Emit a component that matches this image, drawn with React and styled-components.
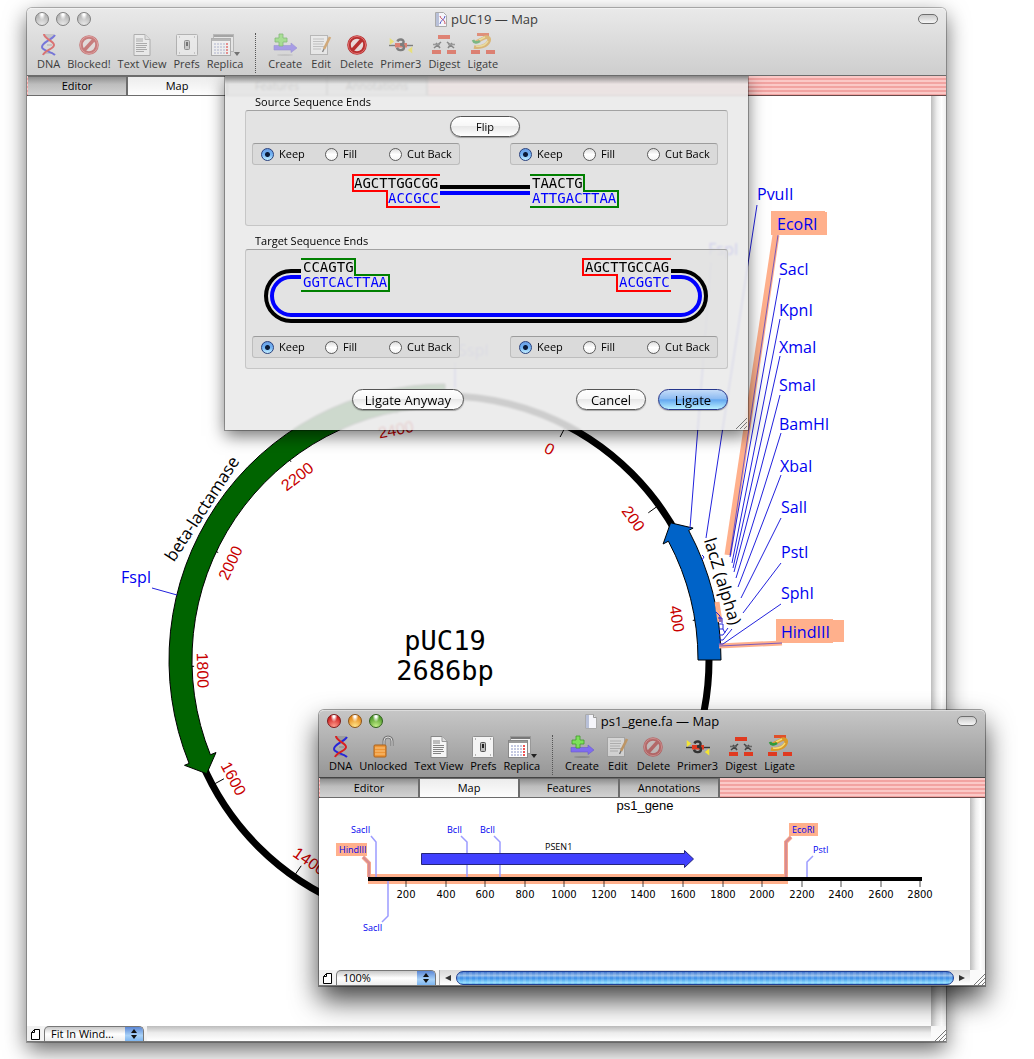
import React from "react";
import styled, { createGlobalStyle, css } from "styled-components";

const SANS = `"Open Sans", "Noto Sans", sans-serif`;
const MONO = `"DejaVu Sans Mono", monospace`;

const GlobalStyle = createGlobalStyle`
  * {
    box-sizing: border-box;
  }

  body {
    margin: 0;
    background: #fff;
    font-family: ${SANS};
    font-size: 11px;
    color: #000;
  }

  button, input, select {
    font-family: inherit;
  }

  svg {
    display: block;
  }
`;

const Desktop = styled.main`
  position: relative;
  padding: 8px 88px 18px 27px;
  overflow: hidden;
`;

const Window = styled.section`
  border-radius: 5px 5px 0 0;
  background: #fff;
  box-shadow: 0 0 0 1px rgba(0, 0, 0, 0.25), 0 8px 22px rgba(0, 0, 0, 0.6);
`;

const FloatingWindow = styled(Window)`
  position: absolute;
  left: 319px;
  top: 710px;
  width: 666px;
  box-shadow: 0 0 0 1px rgba(0, 0, 0, 0.35), 0 14px 28px rgba(0, 0, 0, 0.75);
`;

const Header = styled.header`
  height: 68px;
  border-radius: 5px 5px 0 0;
  border-top: 1px solid ${(p) => (p.$active ? "#dcdcdc" : "#f2f2f2")};
  border-bottom: 1px solid ${(p) => (p.$active ? "#444" : "#6b6b6b")};
  background: ${(p) =>
    p.$active
      ? "linear-gradient(#c6c6c6, #969696)"
      : "linear-gradient(#e9e9e9, #cecece)"};
  color: ${(p) => (p.$active ? "#000" : "#3c3c3c")};
`;

const TitleBar = styled.div`
  display: grid;
  grid-template-columns: 1fr auto 1fr;
  align-items: center;
  height: 20px;
  padding: 0 8px;
`;

const Lights = styled.div`
  display: flex;
  gap: 7px;
`;

const Light = styled.button`
  width: 14px;
  height: 14px;
  padding: 0;
  border: 1px solid ${(p) => p.$edge};
  border-radius: 50%;
  background: radial-gradient(ellipse at 50% 5%, #fff 0 12%, transparent 40%),
    radial-gradient(circle at 50% 95%, ${(p) => p.$glow}, ${(p) => p.$tone} 75%);
`;

const Title = styled.h1`
  display: flex;
  align-items: center;
  gap: 4px;
  margin: 0;
  font-size: 13px;
  line-height: 18px;
  font-weight: 400;
`;

const Pill = styled.button`
  justify-self: end;
  width: 20px;
  height: 10px;
  padding: 0;
  border: 1px solid #6e6e6e;
  border-radius: 5px;
  background: linear-gradient(#c9c9c9, #f6f6f6);
`;

const ToolBar = styled.div`
  display: flex;
  gap: 7px;
  height: 46px;
  padding: 4px 10px 0;
`;

const Tool = styled.button`
  display: flex;
  flex-direction: column;
  align-items: center;
  padding: 0;
  border: 0;
  background: none;
  color: inherit;
  font-size: 11px;
  line-height: 14px;
  white-space: nowrap;

  svg {
    height: 24px;
    opacity: ${(p) => (p.$dim ? 0.55 : 1)};
  }
`;

const Divider = styled.span`
  width: 0;
  height: 40px;
  margin: 0 5px;
  border-left: 1px dotted #555;
`;

const Body = styled.div`
  position: relative;
`;

const TabStrip = styled.div`
  display: flex;
  height: 20px;
  padding-left: 1px;
  border-bottom: 1px solid #6b4a4a;
  background: repeating-linear-gradient(#fbc9c7 0 2px, #f2a3a1 2px 4px);
`;

const Tab = styled.button`
  width: 100px;
  height: 20px;
  padding: 0;
  border: 1px solid #6c6c6c;
  border-width: 1px 2px 1px 0;
  font-size: 11px;
  line-height: 16px;
  background: ${(p) =>
    p.$selected
      ? "linear-gradient(#ececec, #fdfdfd)"
      : "linear-gradient(#8f8f8f, #bdbdbd 40%, #d2d2d2)"};
`;

const Canvas = styled.div`
  display: grid;
  grid-template-columns: 1fr 15px;

  > svg {
    width: 100%;
    height: auto;
  }
`;

const Track = styled.div`
  background: linear-gradient(to right, #bdbdbd, #eee 40%, #fff 70%, #f0f0f0);
`;

const Footer = styled.footer`
  display: flex;
  align-items: stretch;
  height: 16px;
  border-bottom: 1px solid #777;
  background: #f3f3f3;
`;

const PageButton = styled.button`
  width: 14px;
  margin-right: 3px;
  padding: 2px 0 0 4px;
  border: 0;
  background: #f0f0f0;
`;

const ZoomBox = styled.label`
  position: relative;
  width: 100px;
  margin-right: 3px;
  border: 1px solid #777;
  border-bottom: 0;
  border-radius: 5px 5px 0 0;
  overflow: hidden;
  background: linear-gradient(#c8c8c8, #fff 50%, #ededed);
`;

const ZoomSelect = styled.select`
  display: block;
  width: 100%;
  height: 100%;
  padding: 0 18px 0 6px;
  border: 0;
  background: none;
  appearance: none;
  font-size: 11px;
  line-height: 14px;
`;

const Stepper = styled.span`
  position: absolute;
  top: 0;
  right: 0;
  width: 18px;
  height: 100%;
  padding: 1px 0 0 5px;
  background: linear-gradient(#5a86d4, #a9d2f8 60%, #7fb6f0);
  pointer-events: none;
`;

const EmptyBar = styled.div`
  flex: 1;
  background: linear-gradient(#bcbcbc, #ececec 45%, #fff);
`;

const ScrollBar = styled.div`
  display: flex;
  align-items: center;
  flex: 1;
  border-left: 1px solid #aaa;
  background: linear-gradient(#d8d8d8, #fff);
`;

const ScrollArrow = styled.button`
  width: 16px;
  height: 100%;
  padding: 0;
  border: 0;
  background: none;
  color: #333;

  svg {
    margin: 0 auto;
  }
`;

const Thumb = styled.div`
  flex: 1;
  height: 14px;
  border: 1px solid #1f3f93;
  border-radius: 7px;
  background: repeating-linear-gradient(
      to right,
      rgba(255, 255, 255, 0.12) 0 3px,
      transparent 3px 6px
    ),
    linear-gradient(#4176cf, #8fbcec 30%, #3d8ee8 50%, #8ddcff 90%, #5aa5e0);
`;

const Grip = styled.div`
  display: flex;
  align-items: flex-end;
  justify-content: flex-end;
  width: 15px;
  background: #fafafa;
`;

const Sheet = styled.form`
  position: absolute;
  top: 0;
  left: 0;
  right: 0;
  display: flex;
  flex-direction: column;
  width: 523px;
  margin: 0 auto;
  padding: 18px 20px 20px;
  background: linear-gradient(rgba(110, 110, 110, 0.8), rgba(150, 150, 150, 0) 8px),
    rgba(233, 233, 233, 0.88);
  backdrop-filter: blur(1px);
  box-shadow: 0 0 0 1px rgba(0, 0, 0, 0.3), 0 6px 16px rgba(0, 0, 0, 0.55);
  clip-path: inset(0 -30px -30px -30px);
`;

const GroupTitle = styled.h2`
  margin: 0 0 0 10px;
  font-size: 11px;
  line-height: 16px;
  font-weight: 400;
`;

const Group = styled.section`
  display: flex;
  flex-direction: column;
  margin-bottom: 7px;
  padding: 5px 9px 10px 6px;
  border: 1px solid #c6c6c6;
  border-top-color: #a2a2a2;
  border-radius: 3px;
  background: rgba(224, 224, 224, 0.7);

  > svg {
    width: 100%;
    height: auto;
  }
`;

const EndsRow = styled.div`
  display: flex;
  justify-content: space-between;
`;

const RadioBox = styled.div`
  display: grid;
  grid-template-columns: 64px 64px 1fr;
  align-items: center;
  width: 208px;
  height: 22px;
  padding-left: 8px;
  border: 1px solid #bdbdbd;
  border-top-color: #9c9c9c;
  border-radius: 3px;
  background: #dadada;
`;

const RadioLabel = styled.label`
  display: flex;
  align-items: center;
  gap: 5px;
  line-height: 16px;
  white-space: nowrap;
`;

const Radio = styled.input`
  width: 13px;
  height: 13px;
  margin: 0;
  border: 1px solid #5c5c5c;
  border-radius: 50%;
  appearance: none;
  background: linear-gradient(#ddd, #fff 50%, #f4f4f4);

  &:checked {
    border-color: #27407e;
    background: radial-gradient(circle, #0b1b38 0 2px, transparent 3px),
      linear-gradient(#6a9fe3, #72b3f5 50%, #c5f0ff);
  }
`;

const PushButton = styled.button`
  min-width: 70px;
  height: 21px;
  padding: 0 12px;
  border: 1px solid #555;
  border-radius: 11px;
  font-size: ${(p) => (p.$small ? 11 : 13)}px;
  line-height: 18px;
  background: linear-gradient(#fff, #f7f7f7 45%, #e8e8e8 50%, #fff);
  box-shadow: 0 1px 1px rgba(0, 0, 0, 0.3);

  ${(p) =>
    p.$primary &&
    css`
      border-color: #26368c;
      background: linear-gradient(#c5dcf8, #8ebcf2 45%, #64a8f0 52%, #b8efff);
    `}
`;

const FlipButton = styled(PushButton)`
  align-self: center;
  margin-bottom: 6px;
`;

const Actions = styled.div`
  display: flex;
  justify-content: flex-end;
  gap: 12px;
  padding-top: 13px;
`;

const Anyway = styled(PushButton)`
  margin-right: 100px;
`;

const SheetGrip = styled.div`
  position: absolute;
  right: 1px;
  bottom: 1px;
`;

const Spot = styled.text`
  font-family: ${SANS};
  font-size: ${(p) => p.$size || 16}px;
  fill: #0000f0;
`;

const Mark = styled.text`
  font-family: "Liberation Sans", Arial, sans-serif;
  font-size: 16px;
  fill: #c80000;
  text-anchor: middle;
`;

const FeatureName = styled.text`
  font-family: ${SANS};
  font-size: 17px;
  text-anchor: middle;
  paint-order: stroke;
  stroke: #fff;
  stroke-width: 4px;
`;

const Plasmid = styled.text`
  font-family: ${MONO};
  font-size: 27px;
  text-anchor: middle;
`;

const Strand = styled.text`
  font-family: ${MONO};
  font-size: 14px;
  fill: ${(p) => (p.$lower ? "#0000ff" : "#000")};
`;

const Ruler = styled.text`
  font-family: "DejaVu Sans", sans-serif;
  font-size: 10px;
  text-anchor: middle;
`;

const GeneName = styled.text`
  font-family: "Liberation Sans", Arial, sans-serif;
  font-size: 13px;
  text-anchor: middle;
`;

/* ---------- icons ---------- */

const DnaShape = () => (
  <g fill="none" strokeWidth="2">
    <path d="M5 2h9M6 4h7M7 12h5M5 20h8" stroke="#888" strokeWidth="1" />
    <path d="M15 2C12 7 2 9 2 14c0 4 9 4 13 8" stroke="#2626d8" />
    <path d="M4 1c0 5 10 7 10 11S5 17 3 22" stroke="#d82020" />
  </g>
);

const Stop = () => (
  <svg width="22" height="24" viewBox="0 0 22 24">
    <circle cx="11" cy="12" r="8" fill="#f3dada" fillOpacity=".5" stroke="#b83030" strokeWidth="3.6" />
    <path d="M16 6.500L6 17.500" stroke="#b83030" strokeWidth="3.400" />
    <circle cx="11" cy="12" r="8.600" fill="none" stroke="#e07070" strokeWidth="1" />
  </svg>
);

const Bars = () => (
  <g fill="#e03a20">
    <rect x="0" y="17" width="9" height="4" />
    <rect x="15" y="17" width="9" height="4" />
  </g>
);

const icons = {
  dna: (
    <svg width="18" height="24" viewBox="0 0 18 24">
      <DnaShape />
    </svg>
  ),
  stop: <Stop />,
  lock: (
    <svg width="24" height="24" viewBox="0 0 24 24">
      <path d="M13 12V6a4 4 0 0 1 8 0v5" fill="none" stroke="#777" strokeWidth="3" />
      <path d="M13 12V6a4 4 0 0 1 8 0v5" fill="none" stroke="#ddd" strokeWidth="1" />
      <rect x="3" y="10" width="12" height="12" rx="1" fill="#ef9636" stroke="#a8601b" />
      <path d="M4 13h10M4 16h10M4 19h10" stroke="#f9c682" />
    </svg>
  ),
  page: (
    <svg width="20" height="24" viewBox="0 0 20 24">
      <path d="M2 1.500h11l5 5v16H2z" fill="#f6f6f6" stroke="#888" />
      <path d="M13 1.500v5h5" fill="#ddd" stroke="#999" />
      <path d="M4 6h7M4 8h7M4 10.500h11M4 12.500h11M4 14.500h10M4 16.500h11M4 18.500h8" stroke="#777" strokeWidth=".9" />
    </svg>
  ),
  prefs: (
    <svg width="24" height="24" viewBox="0 0 24 24">
      <rect x="1.500" y="1.500" width="21" height="21" rx="1" fill="#f4f4f4" stroke="#909090" />
      <rect x="9.500" y="7.500" width="5" height="9" rx="1" fill="#bbb" stroke="#555" />
      <path d="M12 9v4" stroke="#222" strokeWidth="2" />
      <path d="M4 4h1M19 4h1M4 20h1M19 20h1" stroke="#777" />
    </svg>
  ),
  replica: (
    <svg width="30" height="24" viewBox="0 0 30 24">
      <rect x="3.500" y="1.500" width="20" height="17" fill="#eee" stroke="#999" />
      <path d="M4 3h19" stroke="#777" strokeWidth="2" />
      <rect x="1.500" y="5.500" width="19" height="17" fill="#fff" stroke="#888" />
      <path d="M2 7h18" stroke="#999" strokeWidth="2" />
      <path d="M4 11h11M4 14h11M4 17h11M4 20h11" stroke="#8a94c4" strokeDasharray="2 1" />
      <path d="M17 10v11" stroke="#e55" strokeWidth="2" strokeDasharray="2 1" />
      <path d="M24 19h6l-3 4z" fill="#222" />
    </svg>
  ),
  create: (
    <svg width="26" height="24" viewBox="0 0 26 24">
      <path d="M2 12.500h17v-2.500l6 5-6 4.500v-2.500H2z" fill="#7f6cf0" stroke="#6a5acb" strokeWidth=".6" />
      <path d="M7 1h4v4h4v4h-4v4H7V9H3V5h4z" fill="#7de05a" stroke="#3f9c2c" strokeWidth=".8" />
      <ellipse cx="13" cy="22" rx="8" ry="1" fill="#000" opacity=".15" />
    </svg>
  ),
  edit: (
    <svg width="24" height="24" viewBox="0 0 24 24">
      <rect x="1.500" y="2.500" width="17" height="19" fill="#f4f4f4" stroke="#999" />
      <path d="M4 6h11M4 8.500h11M4 11h10M4 13.500h11M4 16h8" stroke="#999" strokeWidth=".8" />
      <path d="M21 4l-6 12" stroke="#c9822c" strokeWidth="2.600" />
      <path d="M15 16l-1.500 3" stroke="#444" strokeWidth="1.400" />
    </svg>
  ),
  primer: (
    <svg width="26" height="24" viewBox="0 0 26 24">
      <path d="M1 12.500h24" stroke="#333" strokeWidth="1.400" />
      <rect x="7" y="10" width="12" height="4.500" fill="#e03a20" />
      <path d="M2.500 6.500l2.500 2-2.500 2zM23.500 15l-2.500 2 2.500 2z" fill="#f4e532" stroke="#f4e532" strokeWidth="1.500" />
      <path d="M9.500 8.500c1-3 7-2.500 6 1-.4 1.600-2 2-3.500 2 2 0 4 .6 4 2.700 0 3.500-6 4-7 .5" fill="none" stroke="#333" strokeWidth="2.400" />
    </svg>
  ),
  digest: (
    <svg width="24" height="24" viewBox="0 0 24 24">
      <rect x="6" y="2" width="12" height="4" fill="#e03a20" />
      <path d="M2 15l7-6M4 10l4 5M22 15l-7-6M20 10l-4 5" stroke="#444" strokeWidth="1.600" />
      <path d="M1 11.500h7M16 11.500h7" stroke="#666" strokeWidth="1.400" />
      <Bars />
    </svg>
  ),
  ligate: (
    <svg width="24" height="24" viewBox="0 0 24 24">
      <rect x="6" y="0" width="12" height="3" fill="#e0502a" />
      <path d="M3 14c5 1 13-1 15-6 1-3-2-5-5-3l-8 4" fill="none" stroke="#d89a2a" strokeWidth="3.600" />
      <path d="M5 13c6 1 10-2 12-5M8 7l6-3" fill="none" stroke="#f6dc70" strokeWidth="1.400" />
      <path d="M2 7c1 3 4 3 7 1" fill="none" stroke="#2f9a3a" strokeWidth="2.600" />
      <Bars />
    </svg>
  ),
};

const GripLines = () => (
  <svg width="12" height="12" viewBox="0 0 12 12">
    <path d="M1 12L12 1M5 12l7-7M9 12l3-3" stroke="#777" />
  </svg>
);

const DocIcon = ({ dna }) => (
  <svg width="12" height="15" viewBox="0 0 12 15">
    <path d="M.5.500h8l3 3v11H.500z" fill="#f5f5fa" stroke="#aaa" />
    <path d="M1 1h3v13H1z" fill="#b8c0d8" />
    {dna ? (
      <g fill="none">
        <path d="M5 4c1 4 5 3 5 8" stroke="#c84a5a" />
        <path d="M10 4c0 4-5 4-5 8" stroke="#5a5ac8" />
      </g>
    ) : (
      <path d="M8.500.500v3h3" stroke="#999" fill="#ddd" />
    )}
  </svg>
);

/* ---------- window parts ---------- */

const GREY = { tone: "#b5b5b5", glow: "#e8e8e8", edge: "#808080" };
const COLORS = [
  { tone: "#cf1f1f", glow: "#ff9c8c", edge: "#7c1b1b" },
  { tone: "#e58a1c", glow: "#ffe58a", edge: "#8a5418" },
  { tone: "#4f9a2a", glow: "#c5f08a", edge: "#2f5f1c" },
];

const WindowHeader = ({ title, active, first }) => {
  const names = ["Close", "Minimize", "Zoom"];
  const left = [["dna", "DNA"], first, ["page", "Text View"], ["prefs", "Prefs"], ["replica", "Replica"]];
  const right = [
    ["create", "Create"],
    ["edit", "Edit", true],
    ["stop", "Delete", active],
    ["primer", "Primer3"],
    ["digest", "Digest"],
    ["ligate", "Ligate"],
  ];
  const tool = ([icon, label, dim]) => (
    <Tool key={label} $dim={dim || (!active && label !== "Delete")}>
      {icons[icon]}
      {label}
    </Tool>
  );
  return (
    <Header $active={active}>
      <TitleBar>
        <Lights>
          {names.map((name, i) => {
            const c = active ? COLORS[i] : GREY;
            return <Light key={name} aria-label={name} $tone={c.tone} $glow={c.glow} $edge={c.edge} />;
          })}
        </Lights>
        <Title>
          <DocIcon dna={!active} />
          {title}
        </Title>
        <Pill aria-label="Toggle toolbar" />
      </TitleBar>
      <ToolBar>
        {left.map(tool)}
        <Divider />
        {right.map(tool)}
      </ToolBar>
    </Header>
  );
};

const Tabs = () => (
  <TabStrip role="tablist">
    {["Editor", "Map", "Features", "Annotations"].map((t) => (
      <Tab key={t} role="tab" aria-selected={t === "Map"} $selected={t === "Map"}>
        {t}
      </Tab>
    ))}
  </TabStrip>
);

const WindowFooter = ({ zoom, children }) => (
  <Footer>
    <PageButton aria-label="Page setup">
      <svg width="9" height="11" viewBox="0 0 9 11">
        <path d="M3.500.500h5v10h-8v-7zv3h-3" fill="#fff" stroke="#000" />
      </svg>
    </PageButton>
    <ZoomBox>
      <ZoomSelect aria-label="Zoom">
        <option>{zoom}</option>
      </ZoomSelect>
      <Stepper>
        <svg width="8" height="12" viewBox="0 0 8 12">
          <path d="M4 1l3 4H1zM4 11L1 7h6z" fill="#111" />
        </svg>
      </Stepper>
    </ZoomBox>
    {children}
    <Grip>
      <GripLines />
    </Grip>
  </Footer>
);

/* ---------- circular map ---------- */

const CX = 445;
const CY = 660;

const polar = (r, deg) => {
  const a = (deg * Math.PI) / 180;
  return [CX + r * Math.sin(a), CY - r * Math.cos(a)].map((n) => n.toFixed(1)).join(" ");
};

// Band that runs counterclockwise from one angle to a neck, then ends in a head
const arrowPath = (from, neck, tip) =>
  `M${polar(276, from)}A276 276 0 0 0 ${polar(276, neck)}L${polar(281, neck)}L${polar(264, tip)}` +
  `L${polar(247, neck)}L${polar(253, neck)}A253 253 0 0 1 ${polar(253, from)}Z`;

const marks = [0, 200, 400, 600, 800, 1000, 1200, 1400, 1600, 1800, 2000, 2200, 2400];

const sites = [
  ["SacI", 779, 275, "M780 278L730 557"],
  ["KpnI", 779, 316, "M780 319L732 563"],
  ["XmaI", 779, 353, "M780 356L733 568"],
  ["SmaI", 779, 391, "M780 395L734 572"],
  ["BamHI", 779, 430, "M781 433L736 578"],
  ["XbaI", 780, 472, "M781 475L738 587"],
  ["SalI", 781, 513, "M781 518L741 598"],
  ["PstI", 781, 558, "M781 563L743 613"],
  ["SphI", 781, 599, "M781 604L723 644H719"],
  ["PvuII", 757, 200, "M757 205L706 538"],
  ["FspI", 708, 255, "M711 262L690 528"],
  ["SspI", 458, 356, "M455 362V388"],
  ["FspI", 121, 583, "M152 588L177 595"],
];

const PlasmidMap = () => (
  <svg viewBox="27 96 904 930" role="img" aria-label="pUC19 plasmid map">
    <circle cx={CX} cy={CY} r="264" fill="none" stroke="#000" strokeWidth="7" />
    {marks.map((m) => {
      const deg = 27.3 + (m / 2686) * 360;
      const flipped = deg > 90 && deg < 272;
      const turn = flipped ? deg - 180 : deg;
      const [x, y] = polar(flipped ? 242 : 236, deg - 1).split(" ");
      return (
        <g key={m}>
          <path d={`M${polar(261, deg)}L${polar(251, deg)}`} stroke="#000" />
          <Mark x={x} y={y} dy="6" transform={`rotate(${turn} ${x} ${y})`}>
            {m}
          </Mark>
        </g>
      );
    })}
    <path d={arrowPath(360, 248, 244.5)} fill="#006400" stroke="#000" />
    <path d={arrowPath(90, 62, 58.7)} fill="#0063c8" stroke="#000" />

    <path d="M776 235L728 555" stroke="#ffb08c" strokeWidth="7" />
    <path d="M717 602L720 622M782 643L719 646" stroke="#ffb08c" strokeWidth="5" />
    <path d="M771 211h54v1h2v23h-56zM776 619h57v1h11v22h-11v1h-57z" fill="#ffb08c" />
    <g fill="none" stroke="#2222dd">
      <path d="M778 235L730 555M782 643L719 646" strokeOpacity=".6" />
      <path d="M716 612l4 4v6M718 618h4v5M719 624h4v5M719 629h4l2 4M719 635h4l5-7M719 640h4l9-11M702 560l2-3-2-2" />
      {sites.map(([name, , , d]) => (
        <path key={d} d={d} />
      ))}
    </g>
    {sites.map(([name, x, y]) => (
      <Spot key={name + x} x={x} y={y}>
        {name}
      </Spot>
    ))}
    <Spot x="777" y="230">EcoRI</Spot>
    <Spot x="781" y="638">HindIII</Spot>

    <FeatureName x="207" y="512" transform="rotate(-57 207 512)">beta-lactamase</FeatureName>
    <FeatureName x="717" y="583" transform="rotate(73 717 583)">lacZ (alpha)</FeatureName>
    <Plasmid x="445" y="650">pUC19</Plasmid>
    <Plasmid x="445" y="680">2686bp</Plasmid>
  </svg>
);

/* ---------- linear map ---------- */

const GeneMap = () => (
  <svg viewBox="319 798 651 172" role="img" aria-label="ps1_gene map">
    <GeneName x="645" y="810">ps1_gene</GeneName>
    <path d="M336 843h31v13h-31zM789 823h29v13h-29zM368 874h420v10H368z" fill="#ffb08c" />
    <g fill="none">
      <path d="M363 857l6 6v14M791 837l-5 5v35" stroke="#f5a58c" strokeWidth="4" />
      <path d="M363 857l6 6v14M791 837l-5 5v35" stroke="#d98c90" strokeWidth="2" />
      <path
        d="M371 836l5 6v35M461 836l6 6v35M494 836l6 6v35M388 881v35l-6 6M813 856l-6 6v15"
        stroke="#9c9cff"
        strokeWidth="1.500"
      />
    </g>
    <path d="M421.500 853.500h263v-3l9 8.500-9 8.500v-3h-263z" fill="#4040ff" stroke="#26267a" />
    <path d="M368 879h554" stroke="#000" strokeWidth="4" />
    {Array.from({ length: 14 }, (_, i) => {
      const x = Math.round(366.6 + (i + 1) * 39.55);
      return (
        <g key={x}>
          <path d={`M${x} 881v6`} stroke="#000" strokeOpacity=".35" strokeWidth="2" />
          <Ruler x={x} y="898">{(i + 1) * 200}</Ruler>
        </g>
      );
    })}
    <Spot $size={9} x="351" y="833">SacII</Spot>
    <Spot $size={9} x="339" y="853">HindIII</Spot>
    <Spot $size={9} x="447" y="833">BclI</Spot>
    <Spot $size={9} x="480" y="833">BclI</Spot>
    <Spot $size={9} x="363" y="931">SacII</Spot>
    <Spot $size={9} x="792" y="833">EcoRI</Spot>
    <Spot $size={9} x="813" y="853">PstI</Spot>
    <text x="545" y="850" fontSize="9">PSEN1</text>
  </svg>
);

/* ---------- ligation sheet ---------- */

const EndOptions = ({ name }) => (
  <RadioBox role="radiogroup" aria-label={name}>
    {["Keep", "Fill", "Cut Back"].map((option, i) => (
      <RadioLabel key={option}>
        <Radio type="radio" name={name} defaultChecked={i === 0} />
        {option}
      </RadioLabel>
    ))}
  </RadioBox>
);

const LigateSheet = () => (
  <Sheet>
    <GroupTitle>Source Sequence Ends</GroupTitle>
    <Group>
      <FlipButton type="button" $small>Flip</FlipButton>
      <EndsRow>
        <EndOptions name="source-left" />
        <EndOptions name="source-right" />
      </EndsRow>
      <svg viewBox="252 165 466 50">
        <path d="M440 187h90" stroke="#000" strokeWidth="4" />
        <path d="M440 193h90" stroke="#00f" strokeWidth="4" />
        <path d="M440 175H353V191H387V207H440" fill="none" stroke="#f00" strokeWidth="2" />
        <path d="M530 175H584V191H618V207H530" fill="none" stroke="#008000" strokeWidth="2" />
        <Strand x="354" y="188">AGCTTGGCGG</Strand>
        <Strand x="388" y="203" $lower>ACCGCC</Strand>
        <Strand x="532" y="188">TAACTG</Strand>
        <Strand x="532" y="203" $lower>ATTGACTTAA</Strand>
      </svg>
    </Group>
    <GroupTitle>Target Sequence Ends</GroupTitle>
    <Group>
      <svg viewBox="252 255 466 81">
        <path d="M301 271H291A25 25 0 0 0 291 321H681A25 25 0 0 0 681 271H671" fill="none" stroke="#000" strokeWidth="4" />
        <path d="M301 277H291A19 19 0 0 0 291 315H681A19 19 0 0 0 681 277H671" fill="none" stroke="#00f" strokeWidth="4" />
        <path d="M301 259H355V275H389V291H301" fill="none" stroke="#008000" strokeWidth="2" />
        <path d="M671 259H583V275H617V291H671" fill="none" stroke="#f00" strokeWidth="2" />
        <Strand x="303" y="272">CCAGTG</Strand>
        <Strand x="303" y="287" $lower>GGTCACTTAA</Strand>
        <Strand x="585" y="272">AGCTTGCCAG</Strand>
        <Strand x="619" y="287" $lower>ACGGTC</Strand>
      </svg>
      <EndsRow>
        <EndOptions name="target-left" />
        <EndOptions name="target-right" />
      </EndsRow>
    </Group>
    <Actions>
      <Anyway type="button">Ligate Anyway</Anyway>
      <PushButton type="button">Cancel</PushButton>
      <PushButton type="button" $primary>Ligate</PushButton>
    </Actions>
    <SheetGrip>
      <GripLines />
    </SheetGrip>
  </Sheet>
);

const App = () => (
  <>
    <GlobalStyle />
    <Desktop>
      <Window>
        <WindowHeader title="pUC19 — Map" first={["stop", "Blocked!"]} />
        <Body>
          <Tabs />
          <Canvas>
            <PlasmidMap />
            <Track />
          </Canvas>
          <LigateSheet />
        </Body>
        <WindowFooter zoom="Fit In Wind…">
          <EmptyBar />
        </WindowFooter>
      </Window>
      <FloatingWindow>
        <WindowHeader title="ps1_gene.fa — Map" active first={["lock", "Unlocked"]} />
        <Tabs />
        <Canvas>
          <GeneMap />
          <Track />
        </Canvas>
        <WindowFooter zoom="100%">
          <ScrollBar>
            <ScrollArrow aria-label="Scroll left">
              <svg width="6" height="8" viewBox="0 0 6 8">
                <path d="M6 1v6L0 4z" fill="#333" />
              </svg>
            </ScrollArrow>
            <Thumb />
            <ScrollArrow aria-label="Scroll right">
              <svg width="6" height="8" viewBox="0 0 6 8">
                <path d="M0 1v6l6-3z" fill="#333" />
              </svg>
            </ScrollArrow>
          </ScrollBar>
        </WindowFooter>
      </FloatingWindow>
    </Desktop>
  </>
);

export default App;
